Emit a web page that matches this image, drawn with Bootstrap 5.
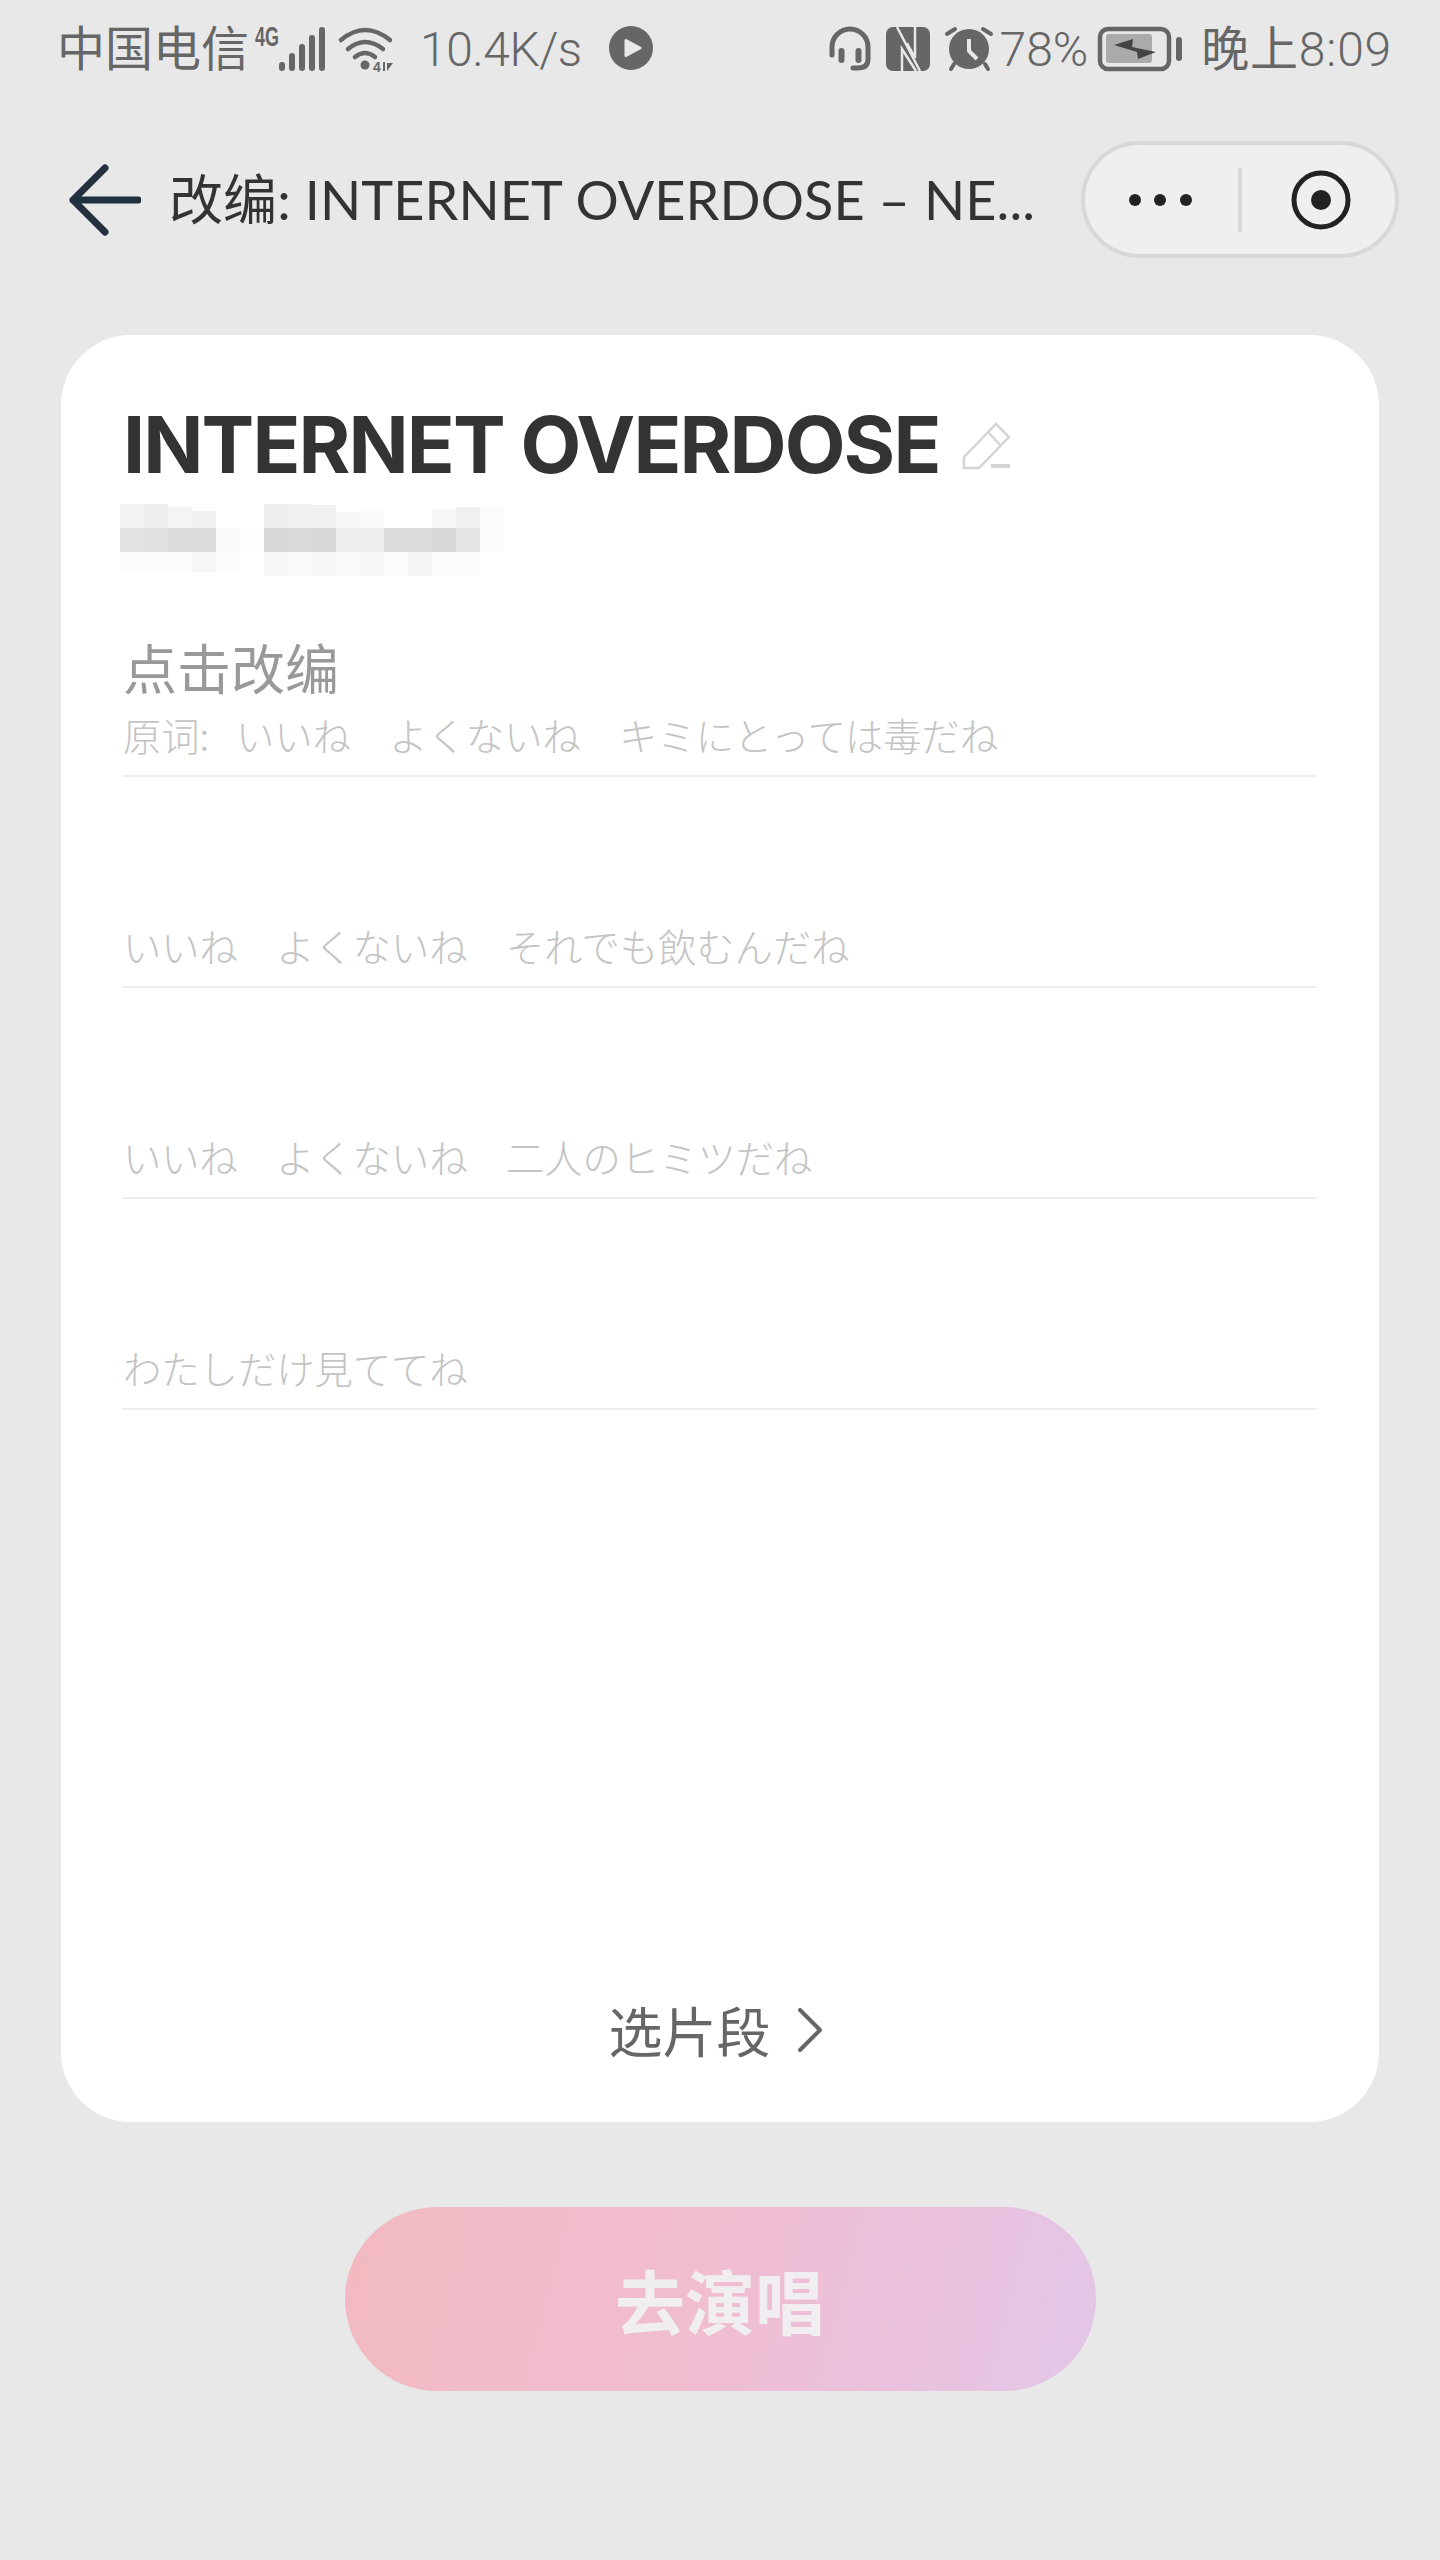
<!DOCTYPE html>
<html lang="zh">
<head>
<meta charset="utf-8">
<title>改编</title>
<link href="https://cdn.jsdelivr.net/npm/bootstrap@5.3.0/dist/css/bootstrap.min.css" rel="stylesheet">
<style>
body{background:#e8e8e8;height:2560px;font-family:"Noto Sans CJK SC",sans-serif;overflow:hidden}
.stat-bar{height:96px;padding:0 48px 0 57px;color:#666;font-family:Roboto,"Noto Sans CJK SC",sans-serif;font-size:48px;font-weight:400;line-height:96px}
.stat-bar svg{display:block;flex:none}
.stat-group > span{padding-top:3px}
.stat-num{font-weight:300}
.net-speed{margin:0 27px 0 20px;letter-spacing:-.5px}
.wifi-mark{margin-left:6px}
.batt-mark{margin-left:8px}
.clock-text{margin-left:17px;letter-spacing:.8px}
.nav-row{height:117px;margin-top:45px;padding:0 41px 0 69px}
.nav-title{font-family:Lato,"Noto Sans CJK SC",sans-serif;font-size:54px;color:#333;line-height:117px;margin-left:28px;letter-spacing:.1px}
.capsule{width:318px;height:117px;border:4px solid #d8d8d8;background:#efefef}
.capsule-sep{width:4px;height:64px;background:#d8d8d8}
.capsule-rec{margin-left:48px}
.sheet{margin:77px 61px 0;height:1787px;padding:69px 62px 62px 61px;border-radius:70px}
.song-name{font-family:Inter,"Liberation Sans",sans-serif;font-weight:700;font-size:79px;line-height:80px;color:#333;letter-spacing:-1.9px;margin-left:1px}
.pen-mark{margin-left:11px}
.mosaic{display:block;margin-top:20px;margin-left:-2px}
.tap-hint{font-size:54px;line-height:60px;color:#999;margin-top:61px;padding-left:1px}
.lyric-line{font-family:"Noto Sans CJK JP",sans-serif;font-weight:300;font-size:38.3px;line-height:50px;color:#c4c4c4;padding:0 0 15px 1px;border-bottom:2px solid #eee;margin-top:13px}
.lyric-line + .lyric-line{margin-top:144px}
.orig-label{margin-right:10px}
.pick-part{font-size:54px;line-height:60px;color:#666;gap:27px;padding-right:9px}
.sing-btn{width:751px;height:184px;margin-top:85px;border:0;border-radius:92px;background:linear-gradient(105deg,#f2b9c0 0%,#f0bdd2 50%,#e3c6e8 100%);color:#f0eef0;font-size:70px;font-weight:700}
</style>
</head>
<body class="m-0">
<div class="stat-bar d-flex align-items-center justify-content-between">
  <div class="stat-group d-flex align-items-center">
    <span>中国电信</span>
    <svg width="80" height="65" viewBox="250 15 80 65" fill="#666"><text x="256" y="45" font-family="Liberation Sans" font-weight="700" font-size="27" textLength="24" lengthAdjust="spacingAndGlyphs">4G</text><rect x="280" y="61" width="6" height="9" rx="3"/><rect x="290" y="52" width="6" height="18" rx="3"/><rect x="300" y="43" width="6" height="27" rx="3"/><rect x="310" y="34" width="6" height="36" rx="3"/><rect x="320" y="26" width="6" height="44" rx="3"/></svg>
    <svg class="wifi-mark" width="65" height="65" viewBox="335 15 65 65" fill="#666"><g fill="none" stroke="#666" stroke-width="4.5" stroke-linecap="round"><path d="M341 39Q365 19 390 39"/><path d="M348 48Q365 34 383 48"/><path d="M355 56Q365 48 375 56"/></g><circle cx="365" cy="64" r="4.5"/><text x="373" y="71" font-family="Liberation Sans" font-weight="700" font-size="14">4</text><path d="M383 61h2v9h-2zM387 62h6l-6 8z"/></svg>
    <span class="net-speed stat-num">10.4K/s</span>
    <svg width="44" height="44" viewBox="0 0 44 44"><circle cx="22" cy="22" r="22" fill="#666"/><path d="M17 14.5 31 22 17 29.500Z" fill="#e8e8e8" stroke="#e8e8e8" stroke-width="3" stroke-linejoin="round"/></svg>
  </div>
  <div class="stat-group d-flex align-items-center">
    <svg width="60" height="65" viewBox="820 15 60 65" fill="none" stroke="#666" stroke-width="5" stroke-linecap="round"><path d="M832 54V46A18 18 0 0 1 868 46V58Q868 67 858 67H853"/><path stroke-width="6" d="M841.500 50V59M858.500 50V59"/></svg>
    <svg width="60" height="65" viewBox="880 15 60 65"><rect x="886" y="26" width="44" height="44" rx="7" fill="#666"/><g fill="none" stroke="#e8e8e8" stroke-width="2.500"><path d="M897 26 920 70M902 70V48L916 70M915 26V57L907 42"/></g></svg>
    <svg width="60" height="65" viewBox="940 15 60 65" fill="#666"><circle cx="969" cy="48" r="20"/><g stroke="#666" stroke-width="4" stroke-linecap="round"><path d="M947 33 955 28M983 28 991 33M954 63 951 68M985 63 988 68"/></g><path d="M969 38V50L977 58" fill="none" stroke="#e8e8e8" stroke-width="4"/></svg>
    <span class="stat-num">78%</span>
    <svg class="batt-mark" width="88" height="65" viewBox="1098 15 88 65" fill="#666"><rect x="1102" y="28" width="69" height="40" rx="8" fill="none" stroke="#666" stroke-width="4.500"/><rect x="1108" y="33" width="46" height="29" rx="3" fill="#aaa"/><rect x="1178" y="36" width="6" height="24" rx="3"/><path d="M1116 44 1135 38 1134 46 1158 51 1140 58 1139 51Z" fill="#444"/></svg>
    <span class="clock-text">晚上<span class="stat-num">8:09</span></span>
  </div>
</div>

<div class="nav-row d-flex align-items-center justify-content-between">
  <div class="d-flex align-items-center">
    <svg width="72" height="72" viewBox="0 0 72 72" fill="none" stroke="#23303f" stroke-width="7" stroke-linecap="round" stroke-linejoin="round"><path d="M69 36H4M36 4 4 36 36 68"/></svg>
    <span class="nav-title">改编: INTERNET OVERDOSE – NE...</span>
  </div>
  <div class="capsule rounded-pill d-flex align-items-center">
    <svg class="ms-4" width="129" height="14" viewBox="0 0 129 14" fill="#222"><circle cx="26" cy="7" r="6"/><circle cx="51" cy="7" r="6"/><circle cx="77" cy="7" r="6"/></svg>
    <div class="capsule-sep"></div>
    <svg class="capsule-rec" width="62" height="62" viewBox="0 0 62 62" fill="none"><circle cx="31" cy="31" r="27" stroke="#222" stroke-width="5"/><circle cx="31" cy="31" r="10" fill="#222"/></svg>
  </div>
</div>

<main class="sheet bg-white d-flex flex-column">
  <div class="d-flex align-items-center">
    <span class="song-name">INTERNET OVERDOSE</span>
    <svg class="pen-mark" width="70" height="70" viewBox="950 410 70 70" fill="none" stroke="#d4d4d4" stroke-width="2.500"><path d="M963 458 995 425 1008 438 978 469H963ZM987 433 1000 447"/><path d="M990 467H1009" stroke-width="4"/></svg>
  </div>
  <svg class="mosaic" width="384" height="72" viewBox="0 0 384 72" shape-rendering="crispEdges">
    <rect x="0" y="0" width="24" height="24" fill="#f2f2f2"/><rect x="24" y="0" width="24" height="24" fill="#eeeeee"/><rect x="48" y="3" width="24" height="21" fill="#f4f4f4"/><rect x="72" y="7" width="24" height="17" fill="#f0f0f0"/><rect x="144" y="0" width="24" height="24" fill="#ededed"/><rect x="168" y="0" width="24" height="24" fill="#f0f0f0"/><rect x="192" y="1" width="24" height="23" fill="#f0f0f0"/><rect x="216" y="8" width="24" height="16" fill="#f8f8f8"/><rect x="240" y="7" width="24" height="17" fill="#f9f9f9"/><rect x="312" y="6" width="24" height="18" fill="#f6f6f6"/><rect x="336" y="3" width="24" height="21" fill="#f0f0f0"/><rect x="360" y="3" width="24" height="21" fill="#fbfbfb"/>
    <rect x="0" y="24" width="24" height="24" fill="#e2e2e2"/><rect x="24" y="24" width="24" height="24" fill="#e0e0e0"/><rect x="48" y="24" width="24" height="24" fill="#dcdcdc"/><rect x="72" y="24" width="24" height="24" fill="#dcdcdc"/><rect x="96" y="24" width="24" height="24" fill="#f9f9f9"/><rect x="120" y="24" width="24" height="24" fill="#fdfdfd"/><rect x="144" y="24" width="24" height="24" fill="#d8d8d8"/><rect x="168" y="24" width="24" height="24" fill="#dadada"/><rect x="192" y="24" width="24" height="24" fill="#d8d8d8"/><rect x="216" y="24" width="24" height="24" fill="#eeeeee"/><rect x="240" y="24" width="24" height="24" fill="#eeeeee"/><rect x="264" y="24" width="24" height="24" fill="#dcdcdc"/><rect x="288" y="24" width="24" height="24" fill="#dcdcdc"/><rect x="312" y="24" width="24" height="24" fill="#d8d8d8"/><rect x="336" y="24" width="24" height="24" fill="#e4e4e4"/><rect x="360" y="24" width="24" height="24" fill="#fbfbfb"/>
    <rect x="0" y="48" width="72" height="20" fill="#fbfbfb"/><rect x="72" y="48" width="24" height="20" fill="#f6f6f6"/><rect x="96" y="48" width="24" height="20" fill="#fcfcfc"/><rect x="144" y="48" width="24" height="24" fill="#f8f8f8"/><rect x="168" y="48" width="24" height="24" fill="#f9f9f9"/><rect x="192" y="48" width="24" height="24" fill="#f6f6f6"/><rect x="216" y="48" width="24" height="24" fill="#f9f9f9"/><rect x="240" y="48" width="24" height="24" fill="#f7f7f7"/><rect x="264" y="48" width="24" height="24" fill="#fcfcfc"/><rect x="288" y="48" width="24" height="24" fill="#f4f4f4"/><rect x="312" y="48" width="48" height="24" fill="#fcfcfc"/>
  </svg>
  <div class="tap-hint">点击改编</div>
  <div class="lyric-line"><span class="orig-label">原词:</span>&nbsp; いいね　よくないね　キミにとっては毒だね</div>
  <div class="lyric-line">いいね　よくないね　それでも飲むんだね</div>
  <div class="lyric-line">いいね　よくないね　二人のヒミツだね</div>
  <div class="lyric-line">わたしだけ見ててね</div>
  <div class="pick-part mt-auto d-flex justify-content-center align-items-center">
    <span>选片段</span>
    <svg width="24" height="44" viewBox="0 0 24 44" fill="none" stroke="#666" stroke-width="4" stroke-linecap="round" stroke-linejoin="round"><path d="M2 2 22 22 2 42"/></svg>
  </div>
</main>
<div class="d-flex justify-content-center">
  <button type="button" class="btn sing-btn">去演唱</button>
</div>
<script src="https://cdn.jsdelivr.net/npm/bootstrap@5.3.0/dist/js/bootstrap.bundle.min.js"></script>
</body>
</html>
